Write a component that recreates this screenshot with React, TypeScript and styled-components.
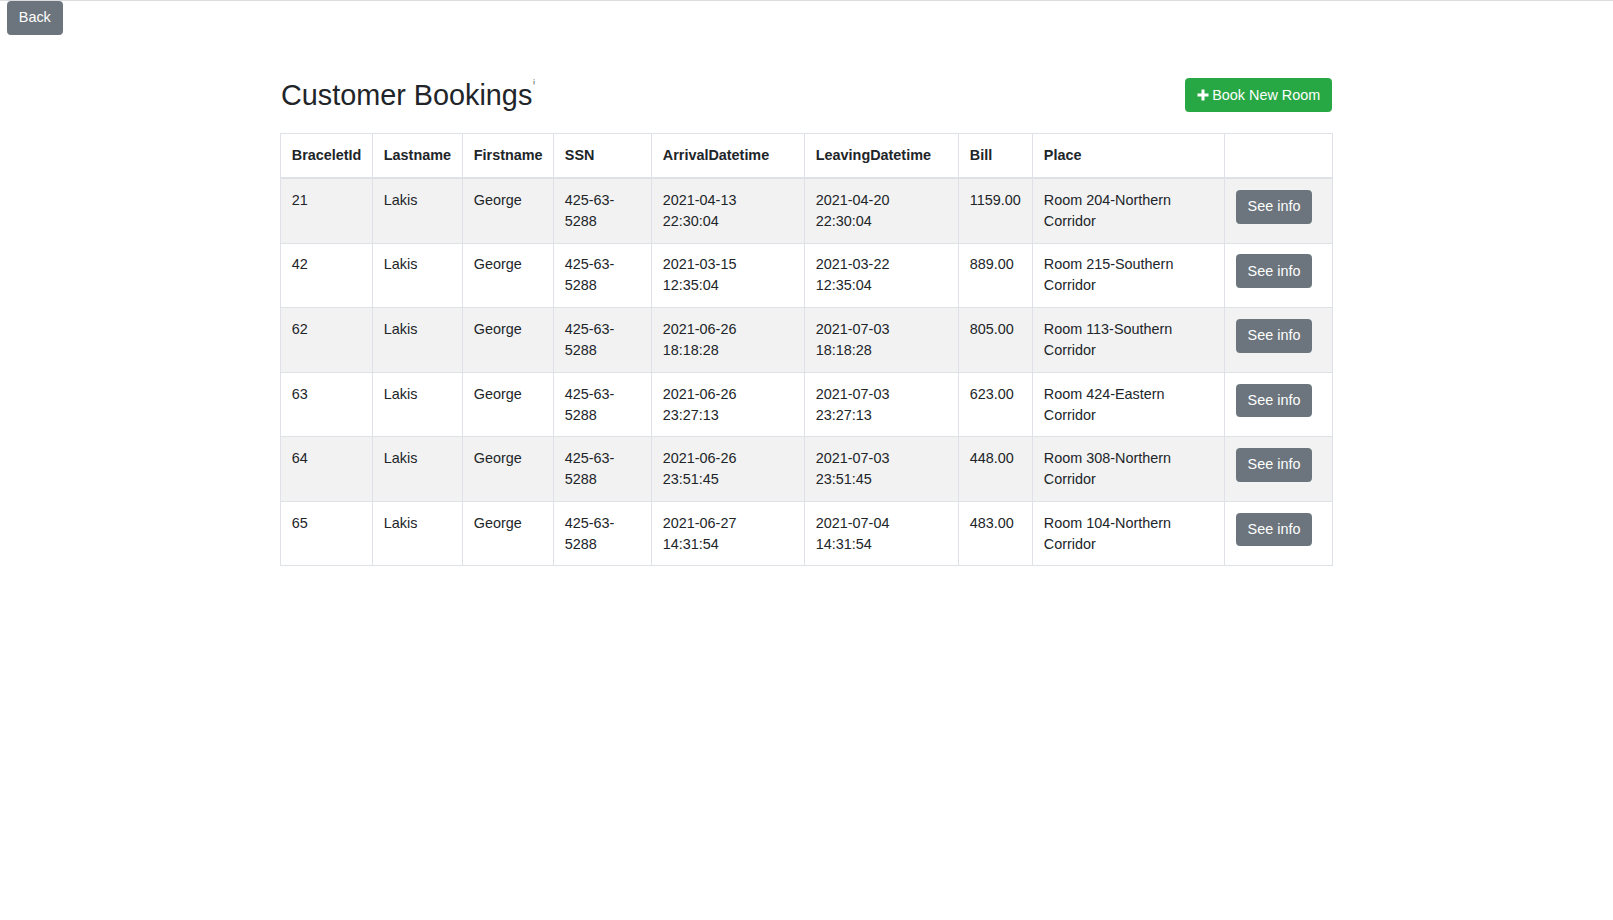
import React from "react";
import styled, { createGlobalStyle } from "styled-components";

interface Booking {
    id: number;
    lastname: string;
    firstname: string;
    ssn: string;
    arrival: string;
    leaving: string;
    bill: string;
    place: string;
}

const bookings: Booking[] = [
    {id: 21, lastname: "Lakis", firstname: "George", ssn: "425-63-5288", arrival: "2021-04-13 22:30:04", leaving: "2021-04-20 22:30:04", bill: "1159.00", place: "Room 204-Northern Corridor"},
    {id: 42, lastname: "Lakis", firstname: "George", ssn: "425-63-5288", arrival: "2021-03-15 12:35:04", leaving: "2021-03-22 12:35:04", bill: "889.00", place: "Room 215-Southern Corridor"},
    {id: 62, lastname: "Lakis", firstname: "George", ssn: "425-63-5288", arrival: "2021-06-26 18:18:28", leaving: "2021-07-03 18:18:28", bill: "805.00", place: "Room 113-Southern Corridor"},
    {id: 63, lastname: "Lakis", firstname: "George", ssn: "425-63-5288", arrival: "2021-06-26 23:27:13", leaving: "2021-07-03 23:27:13", bill: "623.00", place: "Room 424-Eastern Corridor"},
    {id: 64, lastname: "Lakis", firstname: "George", ssn: "425-63-5288", arrival: "2021-06-26 23:51:45", leaving: "2021-07-03 23:51:45", bill: "448.00", place: "Room 308-Northern Corridor"},
    {id: 65, lastname: "Lakis", firstname: "George", ssn: "425-63-5288", arrival: "2021-06-27 14:31:54", leaving: "2021-07-04 14:31:54", bill: "483.00", place: "Room 104-Northern Corridor"},
];

// column widths measured off the screen (px)
const columns: { title: string; width: number }[] = [
    {title: "BraceletId", width: 92},
    {title: "Lastname", width: 90},
    {title: "Firstname", width: 91},
    {title: "SSN", width: 98},
    {title: "ArrivalDatetime", width: 153},
    {title: "LeavingDatetime", width: 154},
    {title: "Bill", width: 74},
    {title: "Place", width: 192},
    {title: "", width: 108},
];

const GlobalStyle = createGlobalStyle`
    * {
        box-sizing: border-box;
    }
    body {
        margin: 0;
        font-family: "Liberation Sans", Arial, sans-serif;
        font-size: 14.4px;
        line-height: 21px;
        color: #212529;
        background: #fff;
    }
`;

const PlusIcon = () => (
    <svg width="12" height="12" viewBox="0 0 12 12" aria-hidden="true">
        <path d="M4.5 0.5h3v4h4v3h-4v4h-3v-4h-4v-3h4z" fill="#fff"/>
    </svg>
);

const App: React.FC = () => {
    return (
        <Page>
            <GlobalStyle/>
            <TopBar>
                <Button $variant="secondary">Back</Button>
            </TopBar>
            <Content>
                <HeaderRow>
                    <Title>Customer Bookings<TitleMark>ⁱ</TitleMark></Title>
                    <Button $variant="success">
                        <PlusIcon/>
                        Book New Room
                    </Button>
                </HeaderRow>
                <Table>
                    <colgroup>
                        {columns.map((c, i) => <Col key={i} $w={c.width}/>)}
                    </colgroup>
                    <thead>
                    <tr>
                        {columns.map((c, i) => <Th key={i}>{c.title}</Th>)}
                    </tr>
                    </thead>
                    <tbody>
                    {bookings.map((b, i) => (
                        <Row key={b.id} $striped={i % 2 === 0}>
                            <Td>{b.id}</Td>
                            <Td>{b.lastname}</Td>
                            <Td>{b.firstname}</Td>
                            <Td>{b.ssn}</Td>
                            <Td>{b.arrival}</Td>
                            <Td>{b.leaving}</Td>
                            <Td>{b.bill}</Td>
                            <Td>{b.place}</Td>
                            <Td>
                                <Button $variant="secondary">See info</Button>
                            </Td>
                        </Row>
                    ))}
                    </tbody>
                </Table>
            </Content>
        </Page>
    );
};

export default App;

export const Page = styled.div`
    min-height: 920px;
    border-top: 1px solid #dcdcdf;
`
export const TopBar = styled.div`
    display: flex;
    padding: 0 7px;
`
export const Content = styled.main`
    width: 1052px;
    margin: 43px 0 0 280px;
`
export const HeaderRow = styled.div`
    display: flex;
    align-items: center;
    justify-content: space-between;
    margin-bottom: 21px;
`
export const Title = styled.h2`
    margin: 0;
    font-size: 28.8px;
    font-weight: 500;
    line-height: 1.2;
    padding-left: 1px;
`
export const TitleMark = styled.span`
    font-size: 12px;
    vertical-align: top;
    line-height: 1;
    color: #333;
    margin-left: 1px;
`
export const Button = styled.button<{ $variant: "secondary" | "success" }>`
    display: inline-flex;
    align-items: center;
    gap: 3px;
    font-family: inherit;
    font-size: 14.4px;
    line-height: 21px;
    padding: 5.4px 10.8px;
    border-radius: 3.6px;
    border: 1px solid ${p => p.$variant === "success" ? "#28a745" : "#6c757d"};
    background-color: ${p => p.$variant === "success" ? "#28a745" : "#6c757d"};
    color: #fff;
    cursor: pointer;
`
export const Table = styled.table`
    width: 1052px;
    table-layout: fixed;
    border-collapse: collapse;
    border: 1px solid #dee2e6;
`
export const Col = styled.col<{ $w: number }>`
    width: ${p => p.$w}px;
`
export const Th = styled.th`
    text-align: left;
    vertical-align: bottom;
    font-weight: 700;
    padding: 10.8px;
    border: 1px solid #dee2e6;
    border-bottom: 2px solid #dee2e6;
`
export const Row = styled.tr<{ $striped: boolean }>`
    background-color: ${p => p.$striped ? "#f2f2f2" : "transparent"};
`
export const Td = styled.td`
    vertical-align: top;
    padding: 10.8px;
    border: 1px solid #dee2e6;
    word-wrap: break-word;
`
